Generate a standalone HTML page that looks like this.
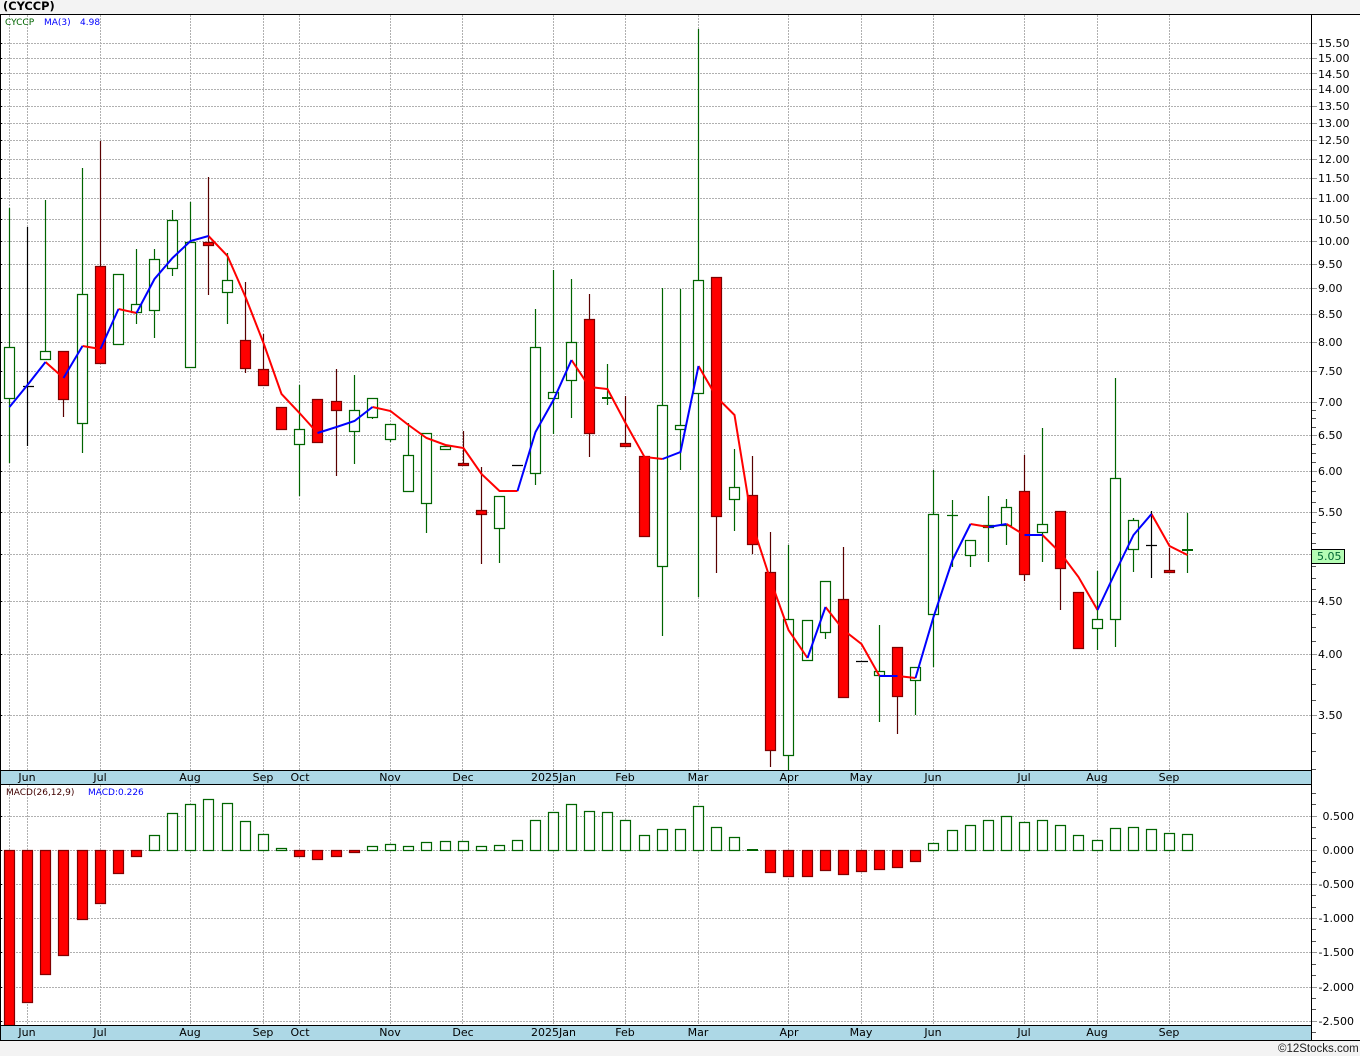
<!DOCTYPE html>
<html><head><meta charset="utf-8"><title>CYCCP</title>
<style>
html,body{margin:0;padding:0;width:1360px;height:1056px;overflow:hidden;background:#f3f3f3}
svg{display:block}
text{font-family:"DejaVu Sans","Liberation Sans",sans-serif;font-size:11px;fill:#000}
.c{shape-rendering:crispEdges}
.w{stroke-width:1.2}
.s{font-size:9px}
</style></head><body>
<svg width="1360" height="1056" viewBox="0 0 1360 1056" xmlns="http://www.w3.org/2000/svg">
<rect x="0" y="0" width="1360" height="1056" fill="#f3f3f3"/>
<rect x="0" y="14" width="1360" height="1026" fill="#fff"/>
<text x="3" y="10" style="font-weight:bold;font-size:11.4px">(CYCCP)</text>

<!-- grid -->
<g class="c" fill="none" stroke="#b0b0b0" stroke-dasharray="2 1">
<path d="M1 43.5H1311M1 58.5H1311M1 73.5H1311M1 89.5H1311M1 106.5H1311M1 123.5H1311M1 140.5H1311M1 159.5H1311M1 178.5H1311M1 198.5H1311M1 219.5H1311M1 241.5H1311M1 264.5H1311M1 288.5H1311M1 314.5H1311M1 342.5H1311M1 371.5H1311M1 402.5H1311M1 435.5H1311M1 471.5H1311M1 512.5H1311M1 554.5H1311M1 601.5H1311M1 654.5H1311M1 715.5H1311"/>
<path d="M1 816.5H1311M1 850.5H1311M1 884.5H1311M1 918.5H1311M1 952.5H1311M1 987.5H1311M1 1021.5H1311"/>
<path d="M9.5 15V770M27.5 15V770M100.5 15V770M190.5 15V770M263.5 15V770M299.5 15V770M390.5 15V770M462.5 15V770M553.5 15V770M625.5 15V770M698.5 15V770M788.5 15V770M861.5 15V770M933.5 15V770M1024.5 15V770M1097.5 15V770M1169.5 15V770"/>
<path d="M9.5 785V1025M27.5 785V1025M100.5 785V1025M190.5 785V1025M263.5 785V1025M299.5 785V1025M390.5 785V1025M462.5 785V1025M553.5 785V1025M625.5 785V1025M698.5 785V1025M788.5 785V1025M861.5 785V1025M933.5 785V1025M1024.5 785V1025M1097.5 785V1025M1169.5 785V1025"/>
</g>

<!-- wicks -->
<path class="w" fill="none" stroke="#006400" d="M9.5 208V463M45.5 200V351M82.5 168V453M136.5 249V324M154.5 249V338M172.5 210V276M190.5 202V242M227.5 253V324M299.5 385V496M354.5 375V464M372.5 398V419M390.5 424V442M408.5 423V455M426.5 433V533M499.5 496V563M535.5 309V485M553.5 270V434M571.5 279V418M607.5 364V405M662.5 288V636M680.5 289V470M698.5 29V597M734.5 449V531M788.5 545V770M825.5 632V639M879.5 625V722M915.5 680V715M933.5 470V667M952.5 500V567M970.5 555V567M988.5 496V562M1006.5 499V545M1042.5 428V562M1097.5 571V650M1115.5 378V647M1133.5 518V572M1187.5 513V573M947 515.5H958"/>
<path class="w" fill="none" stroke="#5a0000" d="M63.5 399V417M100.5 141V266M208.5 177V295M245.5 282V373M263.5 334V369M336.5 369V476M463.5 431V463M481.5 467V564M589.5 294V457M625.5 396V443M716.5 516V573M752.5 456V554M770.5 532V767M843.5 547V599M897.5 647V734M1024.5 455V581M1060.5 568V610M1169.5 548V570"/>
<path class="w" fill="none" stroke="#000" d="M27.5 227V446M23 386.5H34M512 465.5H523M856 661.5H868M1151.5 511V578M1146 545.5H1157"/>

<!-- bodies -->
<path class="w" fill="#fff" stroke="#006400" d="M4.5 347.5h10v51h-10zM40.5 351.5h10v8h-10zM77.5 294.5h10v129h-10zM113.5 274.5h10v70h-10zM131.5 304.5h10v8h-10zM149.5 259.5h10v51h-10zM167.5 220.5h10v48h-10zM185.5 242.5h10v125h-10zM222.5 280.5h10v12h-10zM294.5 429.5h10v15h-10zM349.5 410.5h10v21h-10zM367.5 398.5h10v19h-10zM385.5 424.5h10v15h-10zM403.5 455.5h10v36h-10zM421.5 433.5h10v70h-10zM440.5 446.5h10v3h-10zM494.5 496.5h10v32h-10zM530.5 347.5h10v126h-10zM548.5 392.5h10v6h-10zM566.5 342.5h10v38h-10zM657.5 405.5h10v161h-10zM675.5 425.5h10v4h-10zM693.5 280.5h10v113h-10zM729.5 487.5h10v12h-10zM783.5 619.5h10v136h-10zM802.5 620.5h10v40h-10zM820.5 581.5h10v51h-10zM874.5 671.5h10v4h-10zM910.5 667.5h10v13h-10zM928.5 514.5h10v100h-10zM965.5 540.5h10v15h-10zM983.5 525.5h10v2h-10zM1001.5 507.5h10v18h-10zM1037.5 524.5h10v8h-10zM1092.5 619.5h10v9h-10zM1110.5 478.5h10v141h-10zM1128.5 520.5h10v29h-10z"/>
<path class="w" fill="#ff0000" stroke="#800000" d="M58.5 351.5h10v48h-10zM95.5 266.5h10v97h-10zM203.5 242.5h10v3h-10zM240.5 340.5h10v28h-10zM258.5 369.5h10v16h-10zM276.5 407.5h10v22h-10zM312.5 399.5h10v43h-10zM331.5 401.5h10v9h-10zM458.5 463.5h10v2h-10zM476.5 510.5h10v4h-10zM584.5 319.5h10v114h-10zM620.5 443.5h10v3h-10zM639.5 456.5h10v80h-10zM711.5 277.5h10v239h-10zM747.5 495.5h10v49h-10zM765.5 572.5h10v178h-10zM838.5 599.5h10v98h-10zM892.5 647.5h10v49h-10zM1019.5 491.5h10v83h-10zM1055.5 511.5h10v57h-10zM1073.5 592.5h10v56h-10zM1164.5 570.5h10v2h-10z"/>
<path class="c" fill="#006400" d="M602 397h11v2h-11zM1182 549h11v2h-11z"/>

<!-- MA line -->
<g fill="none" stroke-width="2" stroke-linejoin="miter" transform="translate(.5 0)">
<path stroke="#ff0000" d="M45 362L63 378M82 346L100 349M118 309L136 313M208 236L227 256L245 297L263 343L281 394L299 413L317 433M372 407L390 411L408 425L426 438L445 445L463 448L481 474L499 491L517 491M571 360L589 387L607 389L625 423L644 457L662 459M698 366L716 397L734 415L752 525L770 580L788 630L807 658M825 607L843 630L861 644L879 676M897 676L915 678M970 524L988 527M1006 524L1024 535M1042 535L1060 553L1078 577L1097 610M1151 514L1169 546L1187 555"/>
<path stroke="#0000ff" d="M9 407L27 385L45 362M63 378L82 346M100 349L118 309M136 313L154 279L172 258L190 241L208 236M317 433L336 427L354 421L372 407M517 491L535 432L553 400L571 360M662 459L680 452L698 366M807 658L825 607M879 676L897 676M915 678L933 617L952 560L970 524M988 527L1006 524M1024 535L1042 535M1097 610L1115 572L1133 535L1151 514"/>
</g>

<!-- MACD bars -->
<path class="w" fill="#ff0000" stroke="#800000" d="M4.5 850.5h10v175h-10zM22.5 850.5h10v152h-10zM40.5 850.5h10v124h-10zM58.5 850.5h10v105h-10zM77.5 850.5h10v69h-10zM95.5 850.5h10v53h-10zM113.5 850.5h10v23h-10zM131.5 850.5h10v6h-10zM294.5 850.5h10v6h-10zM312.5 850.5h10v9h-10zM331.5 850.5h10v6h-10zM349.5 850.5h10v2h-10zM765.5 850.5h10v22h-10zM783.5 850.5h10v26h-10zM802.5 850.5h10v26h-10zM820.5 850.5h10v20h-10zM838.5 850.5h10v24h-10zM856.5 850.5h10v21h-10zM874.5 850.5h10v19h-10zM892.5 850.5h10v17h-10zM910.5 850.5h10v11h-10z"/>
<path class="w" fill="#fff" stroke="#006400" d="M149.5 835.5h10V850.5h-10zM167.5 813.5h10V850.5h-10zM185.5 804.5h10V850.5h-10zM203.5 799.5h10V850.5h-10zM222.5 803.5h10V850.5h-10zM240.5 821.5h10V850.5h-10zM258.5 834.5h10V850.5h-10zM276.5 848.5h10V850.5h-10zM367.5 846.5h10V850.5h-10zM385.5 844.5h10V850.5h-10zM403.5 846.5h10V850.5h-10zM421.5 842.5h10V850.5h-10zM440.5 841.5h10V850.5h-10zM458.5 841.5h10V850.5h-10zM476.5 846.5h10V850.5h-10zM494.5 845.5h10V850.5h-10zM512.5 840.5h10V850.5h-10zM530.5 820.5h10V850.5h-10zM548.5 812.5h10V850.5h-10zM566.5 804.5h10V850.5h-10zM584.5 811.5h10V850.5h-10zM602.5 812.5h10V850.5h-10zM620.5 820.5h10V850.5h-10zM639.5 835.5h10V850.5h-10zM657.5 829.5h10V850.5h-10zM675.5 829.5h10V850.5h-10zM693.5 806.5h10V850.5h-10zM711.5 827.5h10V850.5h-10zM729.5 837.5h10V850.5h-10zM928.5 843.5h10V850.5h-10zM947.5 830.5h10V850.5h-10zM965.5 825.5h10V850.5h-10zM983.5 820.5h10V850.5h-10zM1001.5 816.5h10V850.5h-10zM1019.5 822.5h10V850.5h-10zM1037.5 820.5h10V850.5h-10zM1055.5 825.5h10V850.5h-10zM1073.5 835.5h10V850.5h-10zM1092.5 840.5h10V850.5h-10zM1110.5 828.5h10V850.5h-10zM1128.5 827.5h10V850.5h-10zM1146.5 829.5h10V850.5h-10zM1164.5 833.5h10V850.5h-10zM1182.5 834.5h10V850.5h-10z"/>
<path class="c" fill="#006400" d="M747 849h11v2h-11z"/>

<!-- date bars -->
<rect x="0" y="771" width="1311" height="13" fill="#add8e6"/>
<rect x="0" y="1026" width="1311" height="14" fill="#add8e6"/>
<path class="c" fill="none" stroke="#000" d="M0 14.5H1360M0 770.5H1311M0 784.5H1311M0 1025.5H1311M0 1040.5H1360M0.5 14V1040M1311.5 14V1040"/>

<!-- axis ticks -->
<path class="c" fill="none" stroke="#999" d="M1312 43.5h5M1312 58.5h5M1312 73.5h5M1312 89.5h5M1312 106.5h5M1312 123.5h5M1312 140.5h5M1312 159.5h5M1312 178.5h5M1312 198.5h5M1312 219.5h5M1312 241.5h5M1312 264.5h5M1312 288.5h5M1312 314.5h5M1312 342.5h5M1312 371.5h5M1312 402.5h5M1312 435.5h5M1312 471.5h5M1312 512.5h5M1312 601.5h5M1312 654.5h5M1312 715.5h5M1312 816.5h5M1312 850.5h5M1312 884.5h5M1312 918.5h5M1312 952.5h5M1312 987.5h5M1312 1021.5h5"/>
<path class="c" fill="none" stroke="#555" d="M1312 410.5h4M1312 418.5h4M1312 427.5h4M1312 444.5h4M1312 453.5h4M1312 462.5h4M1312 481.5h4M1312 491.5h4M1312 502.5h4M1312 522.5h4M1312 533.5h4M1312 543.5h4M1312 566.5h4M1312 578.5h4M1312 589.5h4M1312 614.5h4M1312 627.5h4M1312 641.5h4M1312 669.5h4M1312 684.5h4M1312 700.5h4M1312 733.5h4M1312 751.5h4M1312 769.5h4M1312 793.5h4M1312 804.5h4M1312 827.5h4M1312 838.5h4M1312 861.5h4M1312 872.5h4M1312 895.5h4M1312 907.5h4M1312 929.5h4M1312 941.5h4M1312 964.5h4M1312 975.5h4M1312 998.5h4M1312 1009.5h4M1312 1032.5h4"/>
<path class="c" fill="none" stroke="#000" d="M1 43.5h1M1 58.5h1M1 73.5h1M1 89.5h1M1 106.5h1M1 123.5h1M1 140.5h1M1 159.5h1M1 178.5h1M1 198.5h1M1 219.5h1M1 241.5h1M1 264.5h1M1 288.5h1M1 314.5h1M1 342.5h1M1 371.5h1M1 402.5h1M1 435.5h1M1 471.5h1M1 512.5h1M1 554.5h1M1 601.5h1M1 654.5h1M1 715.5h1M1 816.5h1M1 850.5h1M1 884.5h1M1 918.5h1M1 952.5h1M1 987.5h1M1 1021.5h1"/>

<!-- price labels -->
<g>
<text x="1318" y="47">15.50</text><text x="1318" y="62">15.00</text><text x="1318" y="78">14.50</text><text x="1318" y="93">14.00</text><text x="1318" y="110">13.50</text><text x="1318" y="127">13.00</text><text x="1318" y="144">12.50</text><text x="1318" y="163">12.00</text><text x="1318" y="182">11.50</text><text x="1318" y="202">11.00</text><text x="1318" y="223">10.50</text><text x="1318" y="245">10.00</text>
<text x="1318" y="268">9.50</text><text x="1318" y="292">9.00</text><text x="1318" y="318">8.50</text><text x="1318" y="346">8.00</text><text x="1318" y="375">7.50</text><text x="1318" y="406">7.00</text><text x="1318" y="439">6.50</text><text x="1318" y="475">6.00</text><text x="1318" y="516">5.50</text><text x="1318" y="605">4.50</text><text x="1318" y="658">4.00</text><text x="1318" y="719">3.50</text>
</g>
<rect class="c" x="1311.5" y="549.5" width="33" height="14" fill="#b4fcb4" stroke="#000"/>
<text x="1317" y="560" style="fill:#063">5.05</text>

<!-- MACD labels -->
<g text-anchor="end">
<text x="1354" y="820">0.500</text><text x="1354" y="854">0.000</text><text x="1354" y="888">-0.500</text><text x="1354" y="922">-1.000</text><text x="1354" y="956">-1.500</text><text x="1354" y="991">-2.000</text><text x="1354" y="1025">-2.500</text>
</g>

<!-- months -->
<g text-anchor="middle" style="fill:#111">
<text x="27" y="781">Jun</text><text x="100" y="781">Jul</text><text x="190" y="781">Aug</text><text x="263" y="781">Sep</text><text x="300" y="781">Oct</text><text x="390" y="781">Nov</text><text x="463" y="781">Dec</text><text x="553.5" y="781">2025Jan</text><text x="625" y="781">Feb</text><text x="698" y="781">Mar</text><text x="789" y="781">Apr</text><text x="861" y="781">May</text><text x="933" y="781">Jun</text><text x="1024" y="781">Jul</text><text x="1097" y="781">Aug</text><text x="1169" y="781">Sep</text>
<text x="27" y="1036">Jun</text><text x="100" y="1036">Jul</text><text x="190" y="1036">Aug</text><text x="263" y="1036">Sep</text><text x="300" y="1036">Oct</text><text x="390" y="1036">Nov</text><text x="463" y="1036">Dec</text><text x="553.5" y="1036">2025Jan</text><text x="625" y="1036">Feb</text><text x="698" y="1036">Mar</text><text x="789" y="1036">Apr</text><text x="861" y="1036">May</text><text x="933" y="1036">Jun</text><text x="1024" y="1036">Jul</text><text x="1097" y="1036">Aug</text><text x="1169" y="1036">Sep</text>
</g>

<!-- legends -->
<text class="s" x="5" y="25" style="fill:#006400">CYCCP</text>
<text class="s" x="44" y="25" style="fill:#0000ff">MA(3)</text>
<text class="s" x="80" y="25" style="fill:#0000ff">4.98</text>
<text class="s" x="6" y="795" style="fill:#400000">MACD(26,12,9)</text>
<text class="s" x="88" y="795" style="fill:#0000ff">MACD:0.226</text>

<text x="1278" y="1052" style="font-family:'Liberation Sans',sans-serif;font-size:11.5px;fill:#222">©12Stocks.com</text>
</svg>
</body></html>
